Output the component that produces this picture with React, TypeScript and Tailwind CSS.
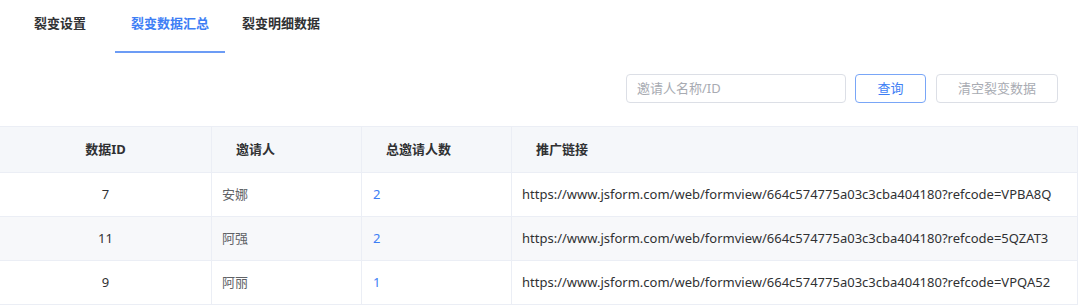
const rows = [
  { id: 7, name: "安娜", total: 2, code: "VPBA8Q" },
  { id: 11, name: "阿强", total: 2, code: "5QZAT3" },
  { id: 9, name: "阿丽", total: 1, code: "VPQA52" },
];

export default function App() {
  return (
    <div
      className="w-[1080px] h-[305px] bg-white overflow-hidden text-[13px] text-[#303133]"
      style={{ fontFamily: '"Noto Sans", "Noto Sans CJK SC", sans-serif' }}
    >
      {/* tabs */}
      <div className="flex h-[53px] pl-[34px] font-bold whitespace-nowrap">
        <div className="h-full flex items-center pb-[5px]">裂变设置</div>
        <div className="h-full w-[110px] ml-[29px] flex items-center justify-center pb-[4px] text-[#3d7ef5] border-b-2 border-[#6c9cf5]">
          裂变数据汇总
        </div>
        <div className="h-full flex items-center pb-[5px] ml-[17px]">裂变明细数据</div>
      </div>

      {/* toolbar */}
      <div className="flex justify-end items-center gap-[9px] pr-[22px] mt-[21px] h-[29px]">
        <div className="w-[220px] h-[29px] border border-[#dcdfe6] rounded-[4px] flex items-center px-[10px] text-[#a8abb2]">
          邀请人名称/ID
        </div>
        <button className="w-[71px] h-[29px] border border-[#79a6f7] rounded-[4px] text-[#3d7ef5] mr-[1px]">
          查询
        </button>
        <button className="w-[122px] h-[29px] border border-[#dcdfe6] rounded-[4px] text-[#a8abb2]">
          清空裂变数据
        </button>
      </div>

      {/* table */}
      <div className="mt-[23px] w-[1078px] border-t border-r border-[#ebeef5]">
        <div className="grid grid-cols-[212px_150px_150px_1fr] h-[46px] bg-[#f5f7fa] font-bold text-[#303133]">
          <div className="flex items-center justify-center border-r border-b border-[#ebeef5]">数据ID</div>
          <div className="flex items-center pl-[24px] border-r border-b border-[#ebeef5]">邀请人</div>
          <div className="flex items-center pl-[24px] border-r border-b border-[#ebeef5]">总邀请人数</div>
          <div className="flex items-center pl-[24px] border-b border-[#ebeef5]">推广链接</div>
        </div>
        {rows.map((r, i) => (
          <div
            key={r.id}
            className={
              "grid grid-cols-[212px_150px_150px_1fr] h-[44px] " +
              (i % 2 === 1 ? "bg-[#f7f8fa]" : "bg-white")
            }
          >
            <div className="flex items-center justify-center border-r border-b border-[#ebeef5] text-[#303133]">
              {r.id}
            </div>
            <div className="flex items-center pl-[10px] border-r border-b border-[#ebeef5] text-[#606266]">
              {r.name}
            </div>
            <div className="flex items-center pl-[11px] border-r border-b border-[#ebeef5] text-[#3d7ef5]">
              {r.total}
            </div>
            <div className="flex items-center pl-[10px] border-b border-[#ebeef5] text-[#303133] whitespace-nowrap">
              https://www.jsform.com/web/formview/664c574775a03c3cba404180?refcode={r.code}
            </div>
          </div>
        ))}
      </div>
    </div>
  );
}
